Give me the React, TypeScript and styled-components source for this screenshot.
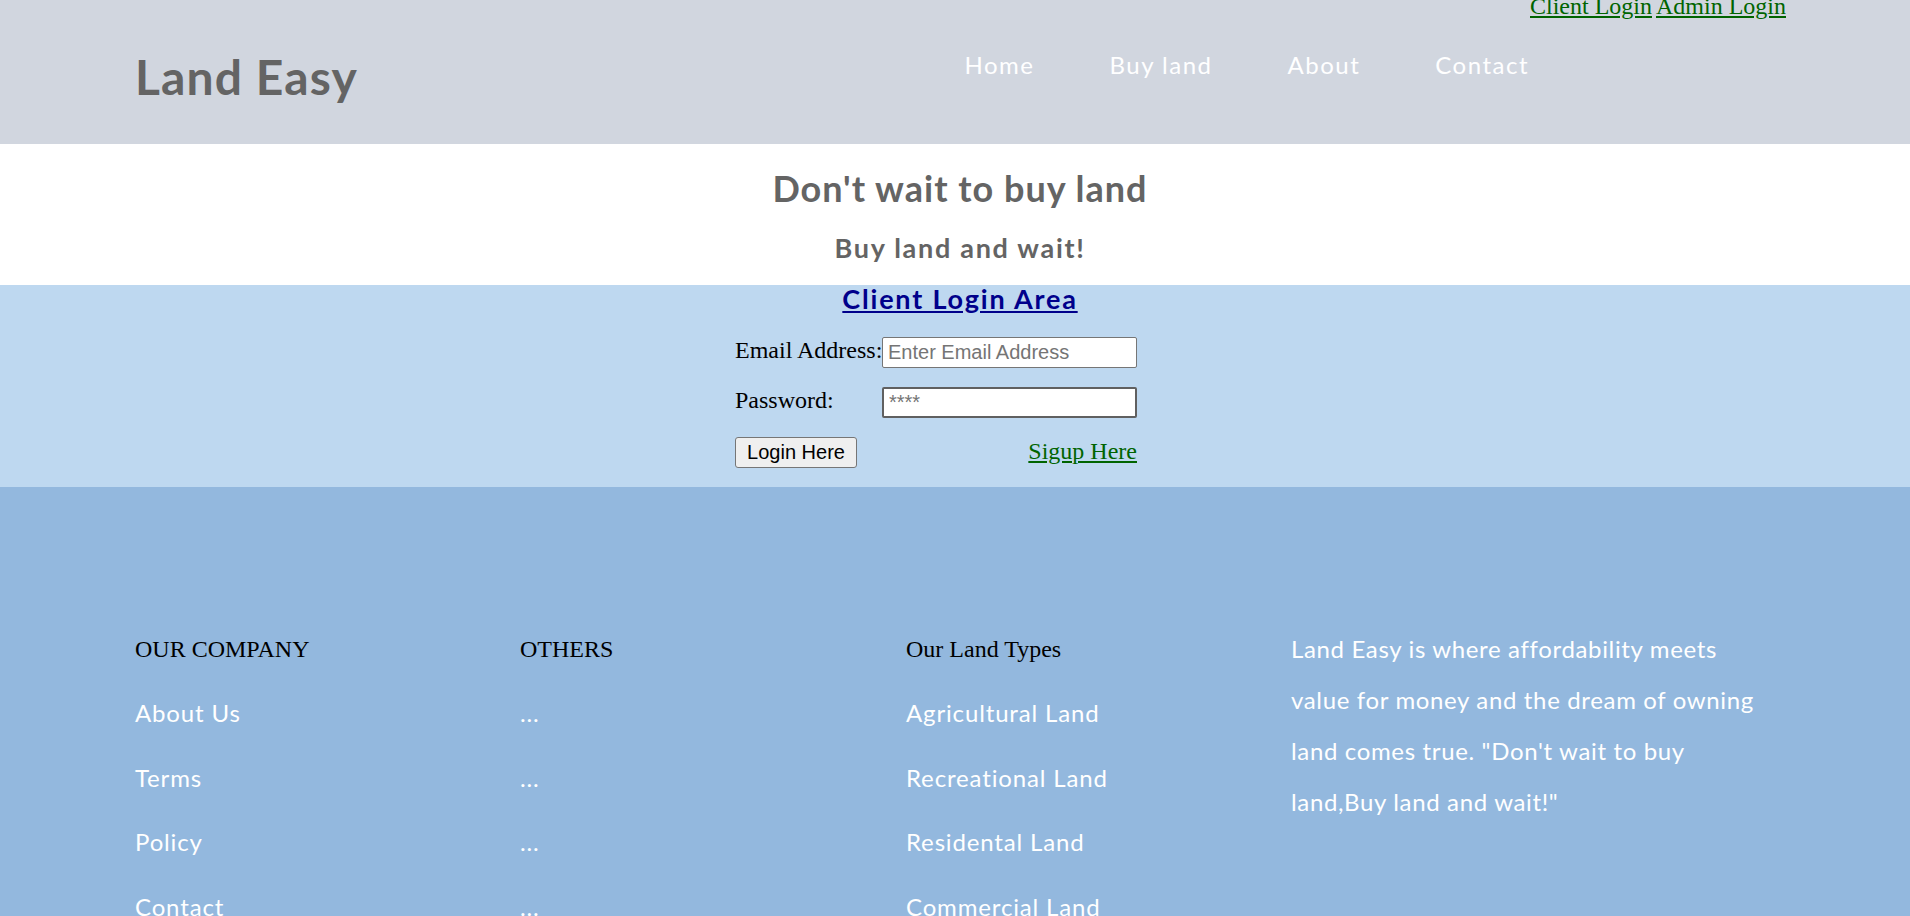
import React from "react";
import styled, { createGlobalStyle } from "styled-components";

const GlobalStyle = createGlobalStyle`
  html, body {
    margin: 0;
    padding: 0;
    background: #ffffff;
    font-family: "Liberation Serif", "Times New Roman", serif;
    font-size: 24px;
  }
  * { box-sizing: border-box; }
`;

const Page = styled.div`
  width: 100%;
  overflow: hidden;
`;

const Header = styled.header`
  display: flex;
  align-items: flex-start;
  height: 144px;
  padding: 0 124px 0 135px;
  background: #d1d6df;
`;

const Logo = styled.div`
  flex: 1;
  margin-top: 48px;
  font-family: Lato, "Liberation Sans", sans-serif;
  font-weight: 700;
  font-size: 48px;
  line-height: 58px;
  letter-spacing: 1.1px;
  color: #646464;
`;

const Nav = styled.nav`
  display: flex;
  gap: 75px;
  margin-top: 50px;
`;

const NavLink = styled.a`
  font-family: Lato, "Liberation Sans", sans-serif;
  font-size: 24px;
  line-height: 29px;
  letter-spacing: 1.5px;
  color: #ffffff;
  text-decoration: none;
`;

const TopLinks = styled.div`
  display: flex;
  gap: 4px;
  margin-top: -7px;
  margin-left: 1px;
`;

const TopLink = styled.a`
  font-family: "Liberation Serif", "Times New Roman", serif;
  font-size: 24px;
  color: #006400;
  text-decoration: underline;
`;

const Hero = styled.section`
  display: flex;
  flex-direction: column;
  align-items: center;
  padding: 23px 0 21px 10px;
  background: #ffffff;
`;

const HeroTitle = styled.h1`
  margin: 0;
  font-family: Lato, "Liberation Sans", sans-serif;
  font-weight: 700;
  font-size: 36px;
  line-height: 43px;
  letter-spacing: 1px;
  color: #646464;
`;

const HeroSub = styled.h2`
  margin: 22px 0 0;
  font-family: Lato, "Liberation Sans", sans-serif;
  font-weight: 700;
  font-size: 27px;
  line-height: 32px;
  letter-spacing: 1.7px;
  color: #646464;
`;

const LoginSection = styled.section`
  display: flex;
  flex-direction: column;
  padding-bottom: 19px;
  background: #bed8f0;
`;

const LoginTitle = styled.a`
  align-self: center;
  margin-left: 10px;
  font-family: Lato, "Liberation Sans", sans-serif;
  font-weight: 700;
  font-size: 27px;
  line-height: 27px;
  letter-spacing: 1.8px;
  color: #00008b;
  text-decoration: underline;
`;

const LoginForm = styled.form`
  display: grid;
  grid-template-columns: 147px 255px;
  grid-auto-rows: 31px;
  row-gap: 19px;
  margin: 25px 0 0 735px;
`;

const Label = styled.label`
  align-self: start;
  font-size: 24px;
  line-height: normal;
  color: #000000;
  white-space: nowrap;
`;

const Input = styled.input<{ $strong?: boolean }>`
  width: 255px;
  height: 31px;
  padding: 1px 5px;
  border: ${(p) => (p.$strong ? "2px solid #606060" : "1px solid #767676")};
  border-radius: 2px;
  background: #ffffff;
  font-family: "Liberation Sans", Arial, sans-serif;
  font-size: 20px;
  color: #000000;
  outline: none;
  &::placeholder {
    color: #757575;
  }
`;

const Button = styled.button`
  justify-self: start;
  width: 122px;
  height: 31px;
  padding: 0;
  border: 1px solid #767676;
  border-radius: 3px;
  background: #efefef;
  font-family: "Liberation Sans", Arial, sans-serif;
  font-size: 20px;
  color: #000000;
`;

const SignupLink = styled.a`
  justify-self: end;
  align-self: start;
  margin-top: 1px;
  font-size: 24px;
  line-height: normal;
  color: #006400;
  text-decoration: underline;
`;

const Footer = styled.footer`
  padding: 149px 0 120px 135px;
  background: #93b8de;
`;

const FooterGrid = styled.div`
  display: grid;
  grid-template-columns: 385px 386px 385px 484px;
  align-items: start;
`;

const FooterColumn = styled.div`
  display: flex;
  flex-direction: column;
  align-items: flex-start;
  gap: 35.5px;
`;

const FooterHeading = styled.h4`
  margin: 0 0 -0.4px;
  font-family: "Liberation Serif", "Times New Roman", serif;
  font-weight: 400;
  font-size: 24px;
  line-height: normal;
  color: #000000;
`;

const FooterLink = styled.a`
  font-family: Lato, "Liberation Sans", sans-serif;
  font-size: 24px;
  line-height: 29px;
  letter-spacing: 0.85px;
  color: #ffffff;
  text-decoration: none;
`;

const About = styled.p`
  margin: -13px 0 0;
  font-family: Lato, "Liberation Sans", sans-serif;
  font-size: 24px;
  line-height: 51px;
  letter-spacing: 0.65px;
  color: #ffffff;
`;

const columns = [
  { title: "OUR COMPANY", links: ["About Us", "Terms", "Policy", "Contact"] },
  { title: "OTHERS", links: ["...", "...", "...", "..."] },
  {
    title: "Our Land Types",
    links: ["Agricultural Land", "Recreational Land", "Residental Land", "Commercial Land"],
  },
];

export default function App() {
  return (
    <Page>
      <GlobalStyle />
      <Header>
        <Logo>Land Easy</Logo>
        <Nav>
          <NavLink href="#">Home</NavLink>
          <NavLink href="#">Buy land</NavLink>
          <NavLink href="#">About</NavLink>
          <NavLink href="#">Contact</NavLink>
        </Nav>
        <TopLinks>
          <TopLink href="#">Client Login</TopLink>
          <TopLink href="#">Admin Login</TopLink>
        </TopLinks>
      </Header>
      <Hero>
        <HeroTitle>Don't wait to buy land</HeroTitle>
        <HeroSub>Buy land and wait!</HeroSub>
      </Hero>
      <LoginSection>
        <LoginTitle href="#">Client Login Area</LoginTitle>
        <LoginForm onSubmit={(e) => e.preventDefault()}>
          <Label>Email Address:</Label>
          <Input type="email" placeholder="Enter Email Address" />
          <Label>Password:</Label>
          <Input type="password" placeholder="****" $strong />
          <Button type="submit">Login Here</Button>
          <SignupLink href="#">Sigup Here</SignupLink>
        </LoginForm>
      </LoginSection>
      <Footer>
        <FooterGrid>
          {columns.map((col) => (
            <FooterColumn key={col.title}>
              <FooterHeading>{col.title}</FooterHeading>
              {col.links.map((l, i) => (
                <FooterLink key={i} href="#">
                  {l}
                </FooterLink>
              ))}
            </FooterColumn>
          ))}
          <About>
            Land Easy is where affordability meets value for money and the dream of owning land
            comes true. "Don't wait to buy land,Buy land and wait!"
          </About>
        </FooterGrid>
      </Footer>
    </Page>
  );
}
